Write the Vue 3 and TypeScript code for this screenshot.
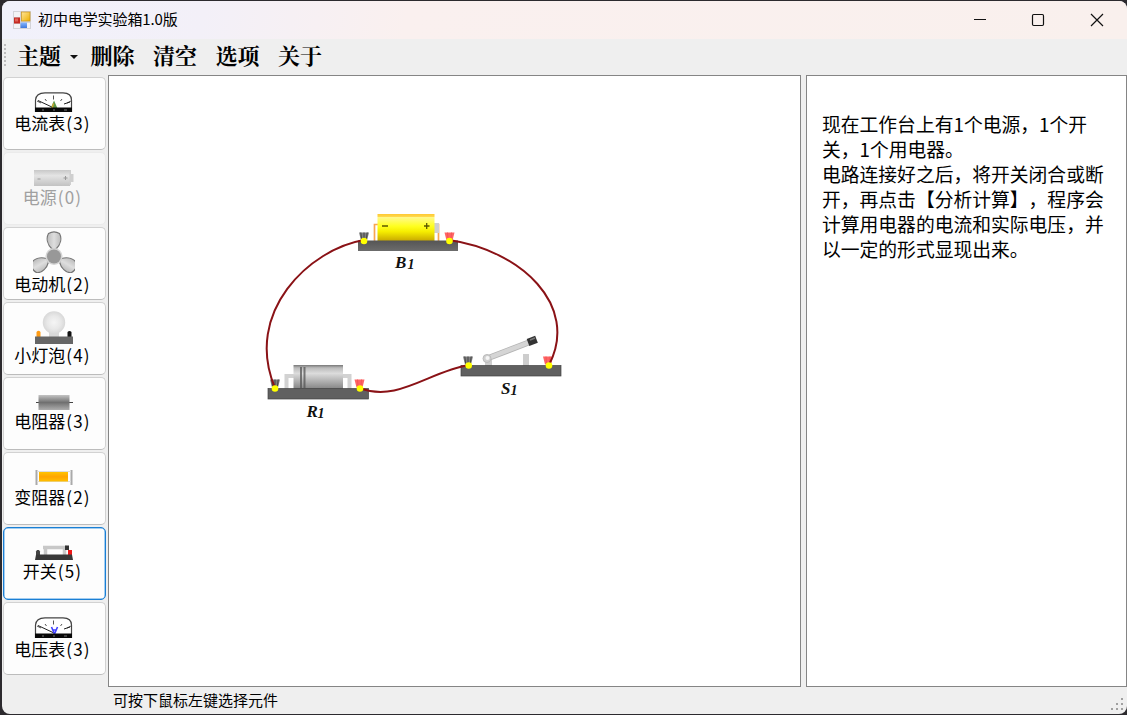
<script setup lang="ts">
interface Part {
  kind: string
  name: string
  count: number
  height: number
}

const menu: string[] = ['主题', '删除', '清空', '选项', '关于']
const parts: Part[] = [
  { kind: 'ammeter', name: '电流表', count: 3, height: 20 },
  { kind: 'battery', name: '电源', count: 0, height: 17 },
  { kind: 'motor', name: '电动机', count: 2, height: 42 },
  { kind: 'bulb', name: '小灯泡', count: 4, height: 33 },
  { kind: 'resistor', name: '电阻器', count: 3, height: 16 },
  { kind: 'rheostat', name: '变阻器', count: 2, height: 17 },
  { kind: 'switch', name: '开关', count: 5, height: 15 },
  { kind: 'voltmeter', name: '电压表', count: 3, height: 21 },
]
const hint: string[] = [
  '现在工作台上有1个电源，1个开',
  '关，1个用电器。',
  '电路连接好之后，将开关闭合或断',
  '开，再点击【分析计算】，程序会',
  '计算用电器的电流和实际电压，并',
  '以一定的形式显现出来。',
]
</script>

<template>
  <div class="desktop">
    <div class="window">
      <header class="titlebar">
        <svg class="app-icon" width="18" height="18" viewBox="0 0 18 18">
          <defs>
            <linearGradient id="gold" x2="1" y2="1"><stop stop-color="#ffe59a" /><stop offset="1" stop-color="#eeb000" /></linearGradient>
            <linearGradient id="blue" x2="0" y2="1"><stop stop-color="#86b6ff" /><stop offset="1" stop-color="#3f79dc" /></linearGradient>
          </defs>
          <rect width="18" height="18" fill="#d3d3d8" />
          <rect x="1" y="1" width="6" height="5" fill="#f3f3f5" />
          <rect x="1" y="13" width="6" height="4" fill="#f3f3f5" />
          <rect x="14" y="12" width="3" height="5" fill="#f3f3f5" />
          <rect x="1" y="6.5" width="6" height="6" fill="#c52b23" />
          <rect x="2" y="7.5" width="3" height="3" fill="#e0645a" />
          <rect x="8.5" y="1" width="8.5" height="9" fill="url(#gold)" stroke="#c99218" stroke-width=".7" />
          <rect x="7.5" y="11.5" width="6.5" height="5.5" fill="url(#blue)" />
        </svg>
        <span class="title">初中电学实验箱1.0版</span>
        <svg class="controls" width="136" height="16" viewBox="0 0 136 16">
          <g fill="none" stroke="#111" stroke-width="1.2">
            <path d="M2 7.5h12" />
            <rect x="60.5" y="2.5" width="11" height="11" rx="1.2" />
            <path d="M119 2l12 12M131 2l-12 12" />
          </g>
        </svg>
      </header>

      <nav class="menu">
        <span class="grip"></span>
        <template v-for="(m, i) in menu" :key="m">
          <span class="menu-item">{{ m }}</span>
          <span v-if="i === 0" class="caret"></span>
        </template>
      </nav>

      <main class="body">
        <aside class="parts">
          <button
            v-for="p in parts"
            :key="p.kind"
            class="part"
            :class="{ off: p.count === 0, active: p.kind === 'switch' }"
          >
            <svg class="icon" width="42" :height="p.height" :viewBox="`0 0 42 ${p.height}`">
              <g v-if="p.kind === 'ammeter' || p.kind === 'voltmeter'">
                <path :d="`M2.5 ${p.height}V8Q3 1 12 .8H30Q38.5 1 38.5 8V${p.height}`" fill="#fff" stroke="#444" stroke-width="1.2" />
                <path d="M4 9l4 2M34 11l4-2M20.5 3.5v4M12 7l1.5 2M29 7l-1.5 2" stroke="#555" stroke-width="1" />
                <path d="M5 8.5L21 16M31 12l6-2" stroke="#222" stroke-width="1" />
                <template v-if="p.kind === 'ammeter'">
                  <path d="M17.5 16.5L21 8.5l3.5 8z" fill="#5c9648" />
                  <path d="M19 16.5l1.5-5" stroke="#e0a928" stroke-width="1.2" />
                </template>
                <path v-else d="M18.5 10l3 7 3-7M19.5 13h4" fill="none" stroke="#4040ff" stroke-width="1.6" />
                <rect x="2" :y="p.height - 4.5" width="37" height="4.5" fill="#080808" />
                <path :d="`M9 ${p.height - 2}h2M20 ${p.height - 2}h2M31 ${p.height - 2}h3`" stroke="#777" stroke-width="1.2" />
              </g>
              <g v-else-if="p.kind === 'battery'">
                <rect x="1" y="1" width="36" height="16" fill="url(#pale)" />
                <path d="M36.5 1v15h1.5v-3h2.5V5H38V1z" fill="#cfcfcf" />
                <path d="M4.5 10h3M30.5 9h4M32.5 7v4" stroke="#999" stroke-width="1" />
              </g>
              <g v-else-if="p.kind === 'motor'">
                <g fill="url(#blade)" stroke="#777" stroke-width="1.2">
                  <path id="fan" d="M19 18C14 13 13 7 15.5 2.500Q21-.8 26.500 2.500C29 7 28 13 23 18z" />
                  <use href="#fan" transform="rotate(120 21 25.5)" />
                  <use href="#fan" transform="rotate(240 21 25.5)" />
                </g>
                <circle cx="21" cy="25.500" r="8.500" fill="#d4d4d4" />
                <circle cx="21" cy="25.500" r="7" fill="#989898" />
              </g>
              <g v-else-if="p.kind === 'bulb'">
                <path d="M16 20h10v6H16z" fill="#d8d8d8" />
                <circle cx="21" cy="11.5" r="11.2" fill="url(#glass)" />
                <path d="M3.5 26v-5q2-2.500 4 0v5z" fill="#ff9c16" />
                <path d="M34.500 26v-5q2-2 4 0v5z" fill="#111" />
                <rect x="2" y="25.500" width="38" height="7.500" fill="#666" />
              </g>
              <g v-else-if="p.kind === 'resistor'">
                <path d="M3 8.5h37" stroke="#444" stroke-width="1.2" />
                <rect x="5.5" y="1" width="31" height="15" fill="url(#tube)" />
              </g>
              <g v-else-if="p.kind === 'rheostat'">
                <path d="M3.5 1v15M38.5 1v15" stroke="#aaa" stroke-width="2" />
                <path d="M4 2.5h34M4 12.5h34" stroke="#ddd" stroke-width="1" />
                <rect x="6" y="3" width="29" height="9.5" fill="url(#orange)" />
              </g>
              <g v-else>
                <path d="M10 2.5h24M12.5 3v7M31.5 3v7" stroke="#c8c8c8" stroke-width="3.5" />
                <path d="M3 11V6.5l1-1.5h2l1 1.5V11z" fill="#444" />
                <rect x="32" y=".5" width="4" height="4.5" fill="#333" />
                <rect x="35" y="5" width="4" height="5" fill="#ee1717" />
                <path d="M3 9.5h36l1 5.5H2z" fill="#383838" />
              </g>
            </svg>
            <span class="label">{{ p.name }}<i class="count">({{ p.count }})</i></span>
          </button>
        </aside>

        <section class="bench">
          <svg width="691" height="610" viewBox="109 76 691 610">
            <defs>
              <linearGradient id="pale" x2="0" y2="1"><stop stop-color="#c8c8c8" /><stop offset=".35" stop-color="#e4e4e4" /><stop offset="1" stop-color="#c2c2c2" /></linearGradient>
              <linearGradient id="blade"><stop stop-color="#bdbdbd" /><stop offset=".5" stop-color="#dedede" /><stop offset="1" stop-color="#bcbcbc" /></linearGradient>
              <radialGradient id="glass"><stop stop-color="#f5f5f5" /><stop offset=".6" stop-color="#e8e8e8" /><stop offset="1" stop-color="#d8d8d8" /></radialGradient>
              <linearGradient id="tube" x2="0" y2="1"><stop stop-color="#c4c4c4" /><stop offset=".5" stop-color="#707070" /><stop offset="1" stop-color="#adadad" /></linearGradient>
              <linearGradient id="orange" x2="0" y2="1"><stop stop-color="#ffc400" /><stop offset=".5" stop-color="#ffa500" /><stop offset="1" stop-color="#ffc000" /></linearGradient>
              <linearGradient id="cell" x2="0" y2="1"><stop stop-color="#ffc832" /><stop offset=".1" stop-color="#ffd94c" /><stop offset=".13" stop-color="#fff98a" /><stop offset=".45" stop-color="#ffff20" /><stop offset=".65" stop-color="#f6ee00" /><stop offset="1" stop-color="#c8a800" /></linearGradient>
              <linearGradient id="base" x2="0" y2="1"><stop stop-color="#555" /><stop offset="1" stop-color="#6c6c6c" /></linearGradient>
              <linearGradient id="steel" x2="0" y2="1"><stop stop-color="#777" /><stop offset=".12" stop-color="#bbb" /><stop offset=".35" stop-color="#dcdcdc" /><stop offset="1" stop-color="#858585" /></linearGradient>
              <g id="post-black"><path d="M-5-8h10l-2 8h-6z" fill="#808080" /><path d="M-3.2-8l.8 7M0-8v7M3.2-8l-.8 7" stroke="#444" stroke-width="1" /></g>
              <g id="post-red"><path d="M-5-8h10l-2 8h-6z" fill="#ff6464" /><path d="M-2-8l.5 7M2-8l-.5 7" stroke="#f05050" stroke-width=".8" /></g>
            </defs>

            <g>
              <path d="M379 224.5h-4.500V241M434 224.500h4.500V241" fill="none" stroke="#f7a650" stroke-width="1.7" />
              <rect x="434" y="223" width="5" height="10" fill="#cfcfcf" />
              <rect x="377.5" y="214" width="57" height="27" fill="url(#cell)" />
              <path d="M382 226h6M424 226h5.5M426.7 223v6" stroke="#5c5700" stroke-width="1.3" />
              <use href="#post-black" x="364" y="240.5" />
              <use href="#post-red" x="449.5" y="240.5" />
              <rect x="358" y="240.5" width="100" height="10.5" fill="url(#base)" />
            </g>

            <g>
              <path d="M286.5 389V376H294M343 376h6.500v13" fill="none" stroke="#d2d2d2" stroke-width="4" />
              <rect x="293.5" y="365" width="49.5" height="24" fill="url(#steel)" />
              <path d="M301 367v21M304.500 367v21" stroke="#555" stroke-width="2" opacity=".75" />
              <use href="#post-black" x="275" y="387.5" />
              <use href="#post-red" x="359.5" y="387.5" />
              <rect x="268" y="388.5" width="100.5" height="10.5" fill="#606060" stroke="#444" stroke-width=".7" />
            </g>

            <g>
              <path d="M485 366v-7h7v7M523 366v-12h6v12" fill="#cdcdcd" />
              <path d="M487 358.5L530 342" stroke="#b4b4b4" stroke-width="6" />
              <path d="M487 358.5L530 342" stroke="#d5d5d5" stroke-width="4.5" />
              <circle cx="487" cy="358.5" r="4" fill="#d0d0d0" stroke="#bbb" />
              <circle cx="487.5" cy="358" r="2" fill="#f5f5f5" />
              <path d="M528 342.5l8.500-3.200" stroke="#333" stroke-width="7.500" />
              <path d="M530 340l5-2" stroke="#777" stroke-width="1.5" />
              <use href="#post-black" x="468" y="364.5" />
              <use href="#post-red" x="548" y="364.5" />
              <rect x="461" y="365.5" width="100" height="10.5" fill="#606060" stroke="#444" stroke-width=".7" />
            </g>

            <g fill="none" stroke="#8a1216" stroke-width="2">
              <path d="M364 240C310 249 243 312 275 388" />
              <path d="M449 240C520 250 580 305 549 365" />
              <path d="M360 388C397 403 430 371 469 365" />
            </g>
            <g fill="#ffff00">
              <circle cx="364" cy="241" r="3.3" /><circle cx="449.5" cy="241" r="3.3" />
              <circle cx="275" cy="388.5" r="3.3" /><circle cx="360" cy="388.5" r="3.3" />
              <circle cx="468.7" cy="365.5" r="3.3" /><circle cx="549" cy="365.5" r="3.3" />
            </g>
            <g class="tag">
              <text x="395" y="268">B</text><text class="sub" x="407.5" y="269">1</text>
              <text x="306.5" y="417">R</text><text class="sub" x="317.5" y="418">1</text>
              <text x="501" y="394">S</text><text class="sub" x="510.5" y="395">1</text>
            </g>
          </svg>
        </section>

        <section class="info">
          <div v-for="line in hint" :key="line">{{ line }}</div>
        </section>
      </main>

      <footer class="status">
        <span>可按下鼠标左键选择元件</span>
        <svg class="resize" width="15" height="15" viewBox="0 0 15 15">
          <path d="M10 1h2v2h-2zM5 6h2v2H5zM10 6h2v2h-2zM0 11h2v2H0zM5 11h2v2H5zM10 11h2v2h-2z" fill="#a0a0a0" />
        </svg>
      </footer>
    </div>
  </div>
</template>

<style>
html,
body {
  margin: 0;
  overflow: hidden;
}
</style>

<style scoped>
.desktop {
  box-sizing: border-box;
  width: 1127px;
  height: 715px;
  padding: 1px 0 1px 2px;
  background: #2c2a2e;
  font-family: "Liberation Sans", "Noto Sans CJK SC", sans-serif;
  color: #000;
}
.window {
  height: 713px;
  display: flex;
  flex-direction: column;
  background: #efefef;
  border-radius: 8px;
  overflow: hidden;
}
.titlebar {
  box-sizing: border-box;
  height: 38px;
  flex: none;
  display: flex;
  align-items: center;
  padding: 0 19px 0 11px;
  background: linear-gradient(100deg, #f1f1fb 0%, #f3f0f8 18%, #faf0ef 36%, #f9f0ed 100%);
}
.app-icon {
  flex: none;
}
.title {
  flex: 1;
  margin-left: 7px;
  padding-bottom: 2px;
  font: 15px/20px "Noto Sans CJK SC", sans-serif;
  letter-spacing: -0.1px;
}
.menu {
  height: 36px;
  flex: none;
  display: flex;
  align-items: center;
}
.grip {
  width: 2px;
  height: 23px;
  margin: 0 11px 4px 2px;
  background: repeating-linear-gradient(#bdbdbd 0 2px, transparent 2px 4px);
}
.menu-item {
  font: 700 22px/30px "Noto Serif CJK SC", "Noto Sans CJK SC", sans-serif;
  margin-right: 18.5px;
  padding-bottom: 5px;
}
.caret {
  width: 0;
  height: 0;
  margin: 0 12.5px 0 -9.5px;
  border: 4px solid transparent;
  border-top-color: #111;
  border-bottom: 0;
}
.body {
  height: 612px;
  flex: none;
  display: flex;
}
.parts {
  width: 106px;
  flex: none;
  box-sizing: border-box;
  padding: 2px 2px 0 1px;
  display: flex;
  flex-direction: column;
  gap: 2px;
}
.part {
  box-sizing: border-box;
  width: 103px;
  height: 73px;
  flex: none;
  padding: 0 2px 2px 0;
  border: 1px solid #d2d2d2;
  border-bottom-color: #bcbcbc;
  border-radius: 5px;
  background: #fdfdfd;
  display: flex;
  flex-direction: column;
  align-items: center;
  justify-content: center;
  color: #000;
}
.part.off {
  background: #f7f7f7;
  border-color: #ebebeb;
  color: #a0a0a0;
}
.part.active {
  border-color: #1a7fd4;
  box-shadow: inset 0 0 0 0.5px #4a9ee4;
}
.icon {
  display: block;
  flex: none;
}
.label {
  display: block;
  height: 21px;
  font: 17px/22px "Noto Sans CJK SC", sans-serif;
  white-space: nowrap;
  margin-right: 2px;
}
.count {
  font-style: normal;
  letter-spacing: 1.2px;
  margin-left: 1px;
}
.bench {
  width: 691px;
  height: 610px;
  flex: none;
  background: #fff;
  border: 1px solid #858585;
}
.bench svg {
  display: block;
}
.tag {
  font: italic bold 17px "Liberation Serif", serif;
  fill: #111;
}
.sub {
  font-size: 14px;
}
.info {
  box-sizing: border-box;
  flex: 1;
  margin-left: 5px;
  border: 1px solid #858585;
  padding: 35px 0 0 15px;
  background: #fff;
  font: 18.8px/25px "Noto Sans CJK SC", sans-serif;
  white-space: nowrap;
  text-spacing-trim: space-all;
}
.status {
  flex: 1;
  display: flex;
  justify-content: space-between;
  align-items: center;
  padding: 0 1px 0 111px;
  font: 15px/20px "Noto Sans CJK SC", sans-serif;
}
.status span {
  padding-bottom: 2px;
}
.resize {
  align-self: flex-end;
  margin-bottom: 2px;
}
</style>
